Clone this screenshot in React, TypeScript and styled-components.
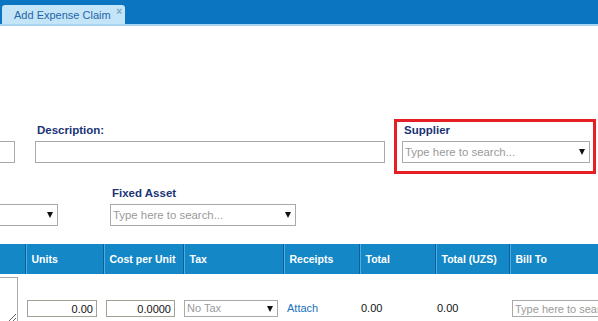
import styled, { createGlobalStyle } from 'styled-components'

const GlobalStyle = createGlobalStyle`
  html, body {
    margin: 0;
    padding: 0;
    background: #fff;
    overflow: hidden;
  }
  body {
    font-family: "Liberation Sans", Arial, sans-serif;
  }
  * { box-sizing: border-box; }
`

const TopBar = styled.div`
  height: 26px;
  background: #0b75c1;
  border-bottom: 2px solid #a9d5f2;
  display: flex;
  align-items: flex-end;
  padding-left: 2px;
`

const Tab = styled.div`
  width: 123px;
  height: 19px;
  background: #c4e4f8;
  border-radius: 3px 3px 0 0;
  display: flex;
  align-items: center;
  padding-left: 12px;
  font-size: 11px;
  color: #2466a6;
`

const TabClose = styled.span`
  margin-left: auto;
  margin-right: 3px;
  align-self: flex-start;
  margin-top: 1px;
  font-size: 10px;
  font-weight: bold;
  color: #7fa3c4;
`

const Form = styled.div`
  padding-top: 93px;
`

const Row = styled.div<{ $ml: number; $mt?: number }>`
  display: flex;
  align-items: flex-start;
  margin-left: ${p => p.$ml}px;
  margin-top: ${p => p.$mt || 0}px;
`

const Field = styled.div<{ $mt?: number; $ml?: number }>`
  display: flex;
  flex-direction: column;
  margin-top: ${p => p.$mt || 0}px;
  margin-left: ${p => p.$ml || 0}px;
`

const Label = styled.div`
  height: 16px;
  line-height: 16px;
  margin-bottom: 3px;
  padding-left: 2px;
  font-size: 11.5px;
  font-weight: bold;
  color: #1a3476;
`

const TextBox = styled.div<{ $w: number }>`
  width: ${p => p.$w}px;
  height: 22px;
  border: 1px solid #a9a9a9;
  background: #fff;
`

const SearchBox = styled.div<{ $w: number; $h?: number }>`
  width: ${p => p.$w}px;
  height: ${p => p.$h || 22}px;
  border: 1px solid #a9a9a9;
  background: #fff;
  display: flex;
  align-items: center;
  padding: 0 4px 0 2px;
  font-size: ${p => (p.$h ? 11 : 11.4)}px;
  color: #9a9a9a;
  white-space: nowrap;
  overflow: hidden;
`

const Arrow = styled.span`
  margin-left: auto;
  flex: none;
  width: 0;
  height: 0;
  border-left: 3.5px solid transparent;
  border-right: 3.5px solid transparent;
  border-top: 6px solid #111;
`

const SupplierBox = styled.div`
  margin-left: 9px;
  width: 202px;
  border: 3px solid #e41f26;
  padding: 0 3px 8px 5px;
  display: flex;
  flex-direction: column;
`

const Table = styled.table`
  margin-top: 18px;
  width: 660px;
  border-collapse: collapse;
  table-layout: fixed;
`

const Th = styled.th<{ $first?: boolean }>`
  height: 30px;
  padding: 0 0 0 6px;
  background: #1487c6;
  color: #fff;
  font-size: 10.5px;
  font-weight: bold;
  text-align: left;
  white-space: nowrap;
  border-left: ${p => (p.$first ? 'none' : '1px solid #0b5e98')};
  box-shadow: ${p => (p.$first ? 'none' : 'inset 1px 0 0 #4aaee6')};
`

const Td = styled.td<{ $pl: number; $pt?: number }>`
  vertical-align: top;
  padding: ${p => p.$pt ?? 26}px 0 0 ${p => p.$pl}px;
  font-size: 11px;
  line-height: 17px;
  color: #111;
  white-space: nowrap;
`

const Notes = styled.textarea`
  display: block;
  margin-left: -7px;
  width: 25px;
  height: 46px;
  border: 1px solid #a9a9a9;
  padding: 0;
`

const NumInput = styled.input<{ $w: number }>`
  display: block;
  width: ${p => p.$w}px;
  height: 17px;
  border: 1px solid #a3a094;
  padding: 0 3px;
  text-align: right;
  font-family: "Liberation Sans", Arial, sans-serif;
  font-size: 11px;
  color: #111;
  outline: none;
`

const AttachLink = styled.a`
  color: #1b72bd;
  text-decoration: none;
`

const TextInput = styled.input<{ $w: number }>`
  display: block;
  width: ${p => p.$w}px;
  height: 17px;
  border: 1px solid #a9a9a9;
  padding: 0 2px;
  font-family: "Liberation Sans", Arial, sans-serif;
  font-size: 11px;
  outline: none;
  &::placeholder { color: #9a9a9a; }
`

const columns = [
  { title: '', width: 25 },
  { title: 'Units', width: 78 },
  { title: 'Cost per Unit', width: 80 },
  { title: 'Tax', width: 100 },
  { title: 'Receipts', width: 76 },
  { title: 'Total', width: 76 },
  { title: 'Total (UZS)', width: 74 },
  { title: 'Bill To', width: 151 },
]

export default function App() {
  return (
    <>
      <GlobalStyle />
      <TopBar>
        <Tab>
          Add Expense Claim
          <TabClose>×</TabClose>
        </Tab>
      </TopBar>
      <Form>
        <Row $ml={-16}>
          <Field $mt={3}>
            <Label />
            <TextBox $w={31} />
          </Field>
          <Field $mt={3} $ml={20}>
            <Label>Description:</Label>
            <TextBox $w={350} />
          </Field>
          <SupplierBox>
            <Label>Supplier</Label>
            <SearchBox $w={188}>
              Type here to search...
              <Arrow />
            </SearchBox>
          </SupplierBox>
        </Row>
        <Row $ml={-13} $mt={11}>
          <Field>
            <Label />
            <SearchBox $w={71}>
              <Arrow />
            </SearchBox>
          </Field>
          <Field $ml={52}>
            <Label>Fixed Asset</Label>
            <SearchBox $w={186}>
              Type here to search...
              <Arrow />
            </SearchBox>
          </Field>
        </Row>
        <Table>
          <colgroup>
            {columns.map((c, i) => (
              <col key={i} style={{ width: c.width }} />
            ))}
          </colgroup>
          <thead>
            <tr>
              {columns.map((c, i) => (
                <Th key={i} $first={i === 0}>{c.title}</Th>
              ))}
            </tr>
          </thead>
          <tbody>
            <tr>
              <Td $pl={0} $pt={3}>
                <Notes />
              </Td>
              <Td $pl={2}>
                <NumInput $w={70} readOnly value="0.00" />
              </Td>
              <Td $pl={3}>
                <NumInput $w={69} readOnly value="0.0000" />
              </Td>
              <Td $pl={1}>
                <SearchBox $w={94} $h={17}>
                  No Tax
                  <Arrow />
                </SearchBox>
              </Td>
              <Td $pl={4}>
                <AttachLink href="#">Attach</AttachLink>
              </Td>
              <Td $pl={2}>0.00</Td>
              <Td $pl={2}>0.00</Td>
              <Td $pl={3}>
                <TextInput $w={120} readOnly placeholder="Type here to search..." />
              </Td>
            </tr>
          </tbody>
        </Table>
      </Form>
    </>
  )
}
